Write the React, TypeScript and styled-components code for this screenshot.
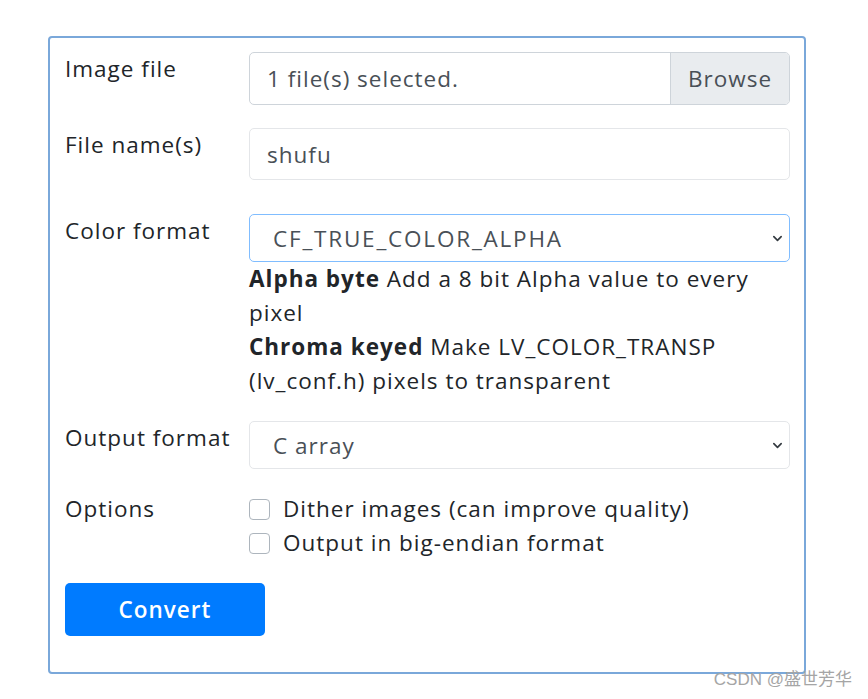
import styled, { createGlobalStyle } from "styled-components";

const GlobalStyle = createGlobalStyle`
  html, body {
    margin: 0;
    padding: 0;
    background: #ffffff;
  }
  body {
    font-family: "Open Sans", "Noto Sans", sans-serif;
    letter-spacing: 1px;
    color: #212529;
  }
`;

const Page = styled.div`
  position: relative;
  width: 868px;
  height: 699px;
  padding: 36px 0 0 48px;
  box-sizing: border-box;
  overflow: hidden;
`;

const Card = styled.form`
  width: 758px;
  box-sizing: border-box;
  border: 2px solid #7aa8da;
  border-radius: 4px;
  padding: 14px 15px 36px 15px;
  display: flex;
  flex-direction: column;
  gap: 23px;
`;

const Row = styled.div<{ $offset?: number }>`
  display: grid;
  grid-template-columns: 184px 541px;
  align-items: start;
  margin-top: ${(p) => p.$offset ?? 0}px;
`;

const Label = styled.label`
  font-size: 22.5px;
  line-height: 33px;
  color: #212529;
`;

const Field = styled.div`
  display: flex;
  flex-direction: column;
`;

const FileBox = styled.div`
  display: flex;
  height: 53px;
  box-sizing: border-box;
  border: 1px solid #ced4da;
  border-radius: 5px;
  overflow: hidden;
  font-size: 22.5px;
  color: #495057;
`;

const FileName = styled.div`
  flex: 1;
  display: flex;
  align-items: center;
  padding-left: 17px;
`;

const BrowseButton = styled.div`
  width: 118px;
  display: flex;
  align-items: center;
  justify-content: center;
  background: #e9ecef;
  border-left: 1px solid #ced4da;
`;

const TextInput = styled.div`
  height: 52px;
  box-sizing: border-box;
  border: 1px solid #e4e6e9;
  border-radius: 5px;
  display: flex;
  align-items: center;
  padding-left: 17px;
  font-size: 22.5px;
  color: #495057;
`;

const Select = styled.div<{ $focused?: boolean; $spacing?: number }>`
  height: 48px;
  box-sizing: border-box;
  border: 1px solid ${(p) => (p.$focused ? "#80bdff" : "#e4e6e9")};
  border-radius: 5px;
  display: flex;
  align-items: center;
  justify-content: space-between;
  padding: 0 6px 0 23px;
  font-size: 22.5px;
  letter-spacing: ${(p) => p.$spacing ?? 1}px;
  color: #495057;
`;

const Hint = styled.div`
  font-size: 22.5px;
  line-height: 34px;
  color: #212529;
`;

const Checks = styled.div`
  display: flex;
  flex-direction: column;
`;

const CheckRow = styled.label`
  display: flex;
  align-items: center;
  gap: 13px;
  font-size: 22.5px;
  line-height: 34px;
  color: #212529;
`;

const CheckBox = styled.span`
  width: 21px;
  height: 21px;
  box-sizing: border-box;
  border: 1px solid #adb5bd;
  border-radius: 4px;
  background: #fff;
`;

const ConvertButton = styled.button`
  width: 200px;
  height: 53px;
  border: none;
  border-radius: 5px;
  background: #007bff;
  color: #fff;
  font-family: "Open Sans", sans-serif;
  font-weight: 600;
  font-size: 22.5px;
  letter-spacing: 1px;
  cursor: pointer;
`;

const Watermark = styled.div`
  position: absolute;
  right: 16px;
  bottom: 9px;
  font-family: "Liberation Sans", "Noto Sans CJK SC", sans-serif;
  font-size: 17px;
  letter-spacing: 0;
  color: #a5a5a5;
`;

const Chevron = () => (
  <svg width="11" height="11" viewBox="0 0 12 12" fill="none">
    <path d="M2 4l4 4 4-4" stroke="#343a40" strokeWidth="1.8" strokeLinecap="round" strokeLinejoin="round" />
  </svg>
);

export default function App() {
  return (
    <>
      <GlobalStyle />
      <Page>
        <Card onSubmit={(e) => e.preventDefault()}>
          <Row>
            <Label>Image file</Label>
            <FileBox>
              <FileName>1 file(s) selected.</FileName>
              <BrowseButton>Browse</BrowseButton>
            </FileBox>
          </Row>
          <Row>
            <Label>File name(s)</Label>
            <TextInput>shufu</TextInput>
          </Row>
          <Row $offset={11}>
            <Label>Color format</Label>
            <Field>
              <Select $focused $spacing={1.8}>
                CF_TRUE_COLOR_ALPHA
                <Chevron />
              </Select>
              <Hint>
                <b>Alpha byte</b> Add a 8 bit Alpha value to every
                <br />
                pixel
                <br />
                <b>Chroma keyed</b> Make LV_COLOR_TRANSP
                <br />
                (lv_conf.h) pixels to transparent
              </Hint>
            </Field>
          </Row>
          <Row>
            <Label>Output format</Label>
            <Select>
              C array
              <Chevron />
            </Select>
          </Row>
          <Row>
            <Label>Options</Label>
            <Checks>
              <CheckRow>
                <CheckBox />
                Dither images (can improve quality)
              </CheckRow>
              <CheckRow>
                <CheckBox />
                Output in big-endian format
              </CheckRow>
            </Checks>
          </Row>
          <div>
            <ConvertButton type="submit">Convert</ConvertButton>
          </div>
        </Card>
        <Watermark>CSDN @盛世芳华</Watermark>
      </Page>
    </>
  );
}
